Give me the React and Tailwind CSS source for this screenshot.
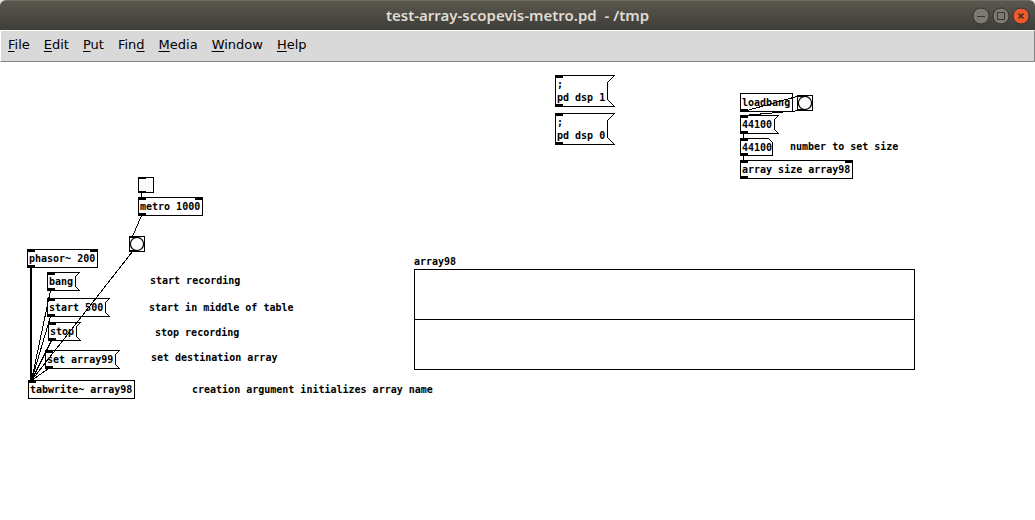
import { useState } from 'react';

const menus = [
  { before: '', key: 'F', after: 'ile' },
  { before: '', key: 'E', after: 'dit' },
  { before: '', key: 'P', after: 'ut' },
  { before: 'Fin', key: 'd', after: '' },
  { before: '', key: 'M', after: 'edia' },
  { before: '', key: 'W', after: 'indow' },
  { before: '', key: 'H', after: 'elp' },
];

const CHAR = 6;
const LINE = 13;

// Patch contents, in canvas coordinates
const objects = [
  { text: 'metro 1000', x: 138, y: 135, inlets: 2, outlets: 1 },
  { text: 'phasor~ 200', x: 27, y: 187, inlets: 2, outlets: 1 },
  { text: 'tabwrite~ array98', x: 28, y: 318, inlets: 1, outlets: 0 },
  { text: 'loadbang', x: 740, y: 31, inlets: 0, outlets: 1 },
  { text: 'array size array98', x: 740, y: 98, inlets: 2, outlets: 1 },
];

const messages = [
  { lines: [';', 'pd dsp 1'], x: 555, y: 13 },
  { lines: [';', 'pd dsp 0'], x: 555, y: 51 },
  { lines: ['44100'], x: 740, y: 53 },
  { lines: ['bang'], x: 47, y: 210 },
  { lines: ['start 500'], x: 47, y: 236 },
  { lines: ['stop'], x: 48, y: 260 },
  { lines: ['set array99'], x: 45, y: 288 },
];

const bangs = [
  { x: 129, y: 174 },
  { x: 797, y: 33 },
];

const comments = [
  { text: 'number to set size', x: 790, y: 78 },
  { text: 'start recording', x: 150, y: 212 },
  { text: 'start in middle of table', x: 149, y: 239 },
  { text: 'stop recording', x: 155, y: 264 },
  { text: 'set destination array', x: 151, y: 289 },
  { text: 'creation argument initializes array name', x: 192, y: 321 },
];

const wires = [
  [141, 130, 141, 135],
  [141, 153, 132, 174],
  [132, 189, 31, 318],
  [50, 228, 31, 318],
  [50, 254, 31, 318],
  [51, 278, 31, 318],
  [48, 306, 31, 318],
  [743, 49, 800, 33],
  [800, 48, 743, 53],
  [743, 71, 743, 76],
  [743, 93, 743, 98],
];

function Nlets({ inlets, outlets }) {
  return (
    <>
      {inlets > 0 && <span className="absolute left-0 top-0 h-[3px] w-[8px] bg-black" />}
      {inlets > 1 && <span className="absolute right-0 top-0 h-[3px] w-[8px] bg-black" />}
      {outlets > 0 && <span className="absolute bottom-0 left-0 h-[3px] w-[8px] bg-black" />}
    </>
  );
}

function ObjectBox({ text, x, y, inlets, outlets }) {
  return (
    <div className="absolute" style={{ left: x, top: y, width: text.length * CHAR + 5 }}>
      <div className="whitespace-pre border border-black px-px py-[2px]">{text}</div>
      <Nlets inlets={inlets} outlets={outlets} />
    </div>
  );
}

function MessageBox({ lines, x, y }) {
  const notch = lines.length > 1 ? 7 : 4;
  const body = Math.max(...lines.map((line) => line.length)) * CHAR + 5;
  const w = body + notch;
  const h = lines.length * LINE + 6;
  const right = w - 0.5;
  const bottom = h - 0.5;
  const inner = right - notch;
  const points = [
    [0.5, 0.5],
    [right, 0.5],
    [inner, 0.5 + notch],
    [inner, bottom - notch],
    [right, bottom],
    [0.5, bottom],
  ].join(' ');

  return (
    <button
      type="button"
      className="absolute whitespace-pre px-[2px] py-[3px] text-left"
      style={{ left: x, top: y, width: w }}
    >
      <svg
        className="absolute inset-0 h-full w-full"
        viewBox={`0 0 ${w} ${h}`}
        fill="none"
        stroke="black"
        shapeRendering="crispEdges"
      >
        <polygon points={points} />
      </svg>
      {lines.map((line) => (
        <span key={line} className="block">{line}</span>
      ))}
      <Nlets inlets={1} outlets={1} />
    </button>
  );
}

function Bang({ x, y }) {
  return (
    <button
      type="button"
      aria-label="bang"
      className="absolute h-4 w-4 border border-black bg-[#fcfcfc]"
      style={{ left: x, top: y }}
    >
      <svg className="absolute -left-px -top-px h-4 w-4" viewBox="0 0 16 16" fill="none" stroke="black">
        <circle cx="8" cy="8" r="6.6" strokeWidth="1.2" />
        <path d="M0 1h7M0 15h7" strokeWidth="2" shapeRendering="crispEdges" />
      </svg>
    </button>
  );
}

function Toggle({ x, y }) {
  return (
    <label className="absolute h-4 w-4" style={{ left: x, top: y }}>
      <input
        type="checkbox"
        aria-label="toggle metro"
        className="block h-4 w-4 appearance-none border border-black bg-[#fcfcfc]"
      />
      <span className="absolute left-0 top-0 h-[2px] w-[8px] bg-black" />
      <span className="absolute bottom-0 left-0 h-[2px] w-[8px] bg-black" />
    </label>
  );
}

function NumberBox({ x, y }) {
  const [value, setValue] = useState('44100');

  return (
    <div className="absolute h-[18px] w-[33px]" style={{ left: x, top: y }}>
      <svg
        className="absolute inset-0 h-full w-full"
        viewBox="0 0 33 18"
        fill="none"
        stroke="black"
        shapeRendering="crispEdges"
      >
        <polygon points="0.5,0.5 28.5,0.5 32.5,4.5 32.5,17.5 0.5,17.5" />
      </svg>
      <input
        type="text"
        aria-label="array size"
        value={value}
        onChange={(e) => setValue(e.target.value)}
        className="relative block h-[18px] w-full bg-transparent py-[2px] pl-[2px] outline-none"
      />
      <Nlets inlets={1} outlets={1} />
    </div>
  );
}

function TitleBar() {
  return (
    <div className="bg-[#e8e8e8]">
      <header className="grid h-[30px] grid-cols-[1fr_auto_1fr] items-center rounded-t-md border-t border-[#6b6960] bg-linear-to-b from-[#5a574e] to-[#3e3d38] px-[5px]">
        <h1 className="col-start-2 whitespace-pre pb-px font-['Noto_Sans',sans-serif] text-[15px] leading-5 font-semibold text-[#dfdbd2]">
          test-array-scopevis-metro.pd  - /tmp
        </h1>
        <div className="flex justify-end gap-[2px]">
          <button type="button" aria-label="Minimize">
            <svg className="block h-[18px] w-[18px]" viewBox="0 0 18 18" fill="none">
              <circle cx="9" cy="9" r="8" fill="#7c7a73" stroke="#34332e" />
              <path d="M5 9.5h8" stroke="#3a3934" shapeRendering="crispEdges" />
            </svg>
          </button>
          <button type="button" aria-label="Maximize">
            <svg className="block h-[18px] w-[18px]" viewBox="0 0 18 18" fill="none">
              <circle cx="9" cy="9" r="8" fill="#7c7a73" stroke="#34332e" />
              <path d="M5.5 5.5h7v7h-7z" stroke="#3a3934" shapeRendering="crispEdges" />
            </svg>
          </button>
          <button type="button" aria-label="Close">
            <svg className="block h-[18px] w-[18px]" viewBox="0 0 18 18" fill="none">
              <circle cx="9" cy="9" r="8" fill="#ee5b2c" stroke="#34332e" />
              <path d="M6.5 6.5l5 5M11.5 6.5l-5 5" stroke="#3f2a1c" strokeWidth="1.5" />
            </svg>
          </button>
        </div>
      </header>
    </div>
  );
}

function MenuBar() {
  return (
    <nav className="flex h-8 items-center gap-[14px] border border-b-[#828282] border-l-white border-r-[#828282] border-t-white bg-[#d9d9d9] px-[7px] pb-[2px] font-['DejaVu_Sans',sans-serif] text-[13px] text-black">
      {menus.map((m) => (
        <button key={m.key} type="button" className="leading-5">
          {m.before}
          <span className="underline decoration-1 underline-offset-2">{m.key}</span>
          {m.after}
        </button>
      ))}
    </nav>
  );
}

function Patch() {
  return (
    <main className="relative min-h-[400px] flex-1 overflow-hidden bg-white font-['DejaVu_Sans_Mono',monospace] text-[10px] font-bold leading-[13px] text-black">
      {objects.map((o) => (
        <ObjectBox key={o.text} {...o} />
      ))}
      {messages.map((m) => (
        <MessageBox key={`${m.x}-${m.y}`} {...m} />
      ))}
      {bangs.map((b) => (
        <Bang key={b.x} {...b} />
      ))}
      <Toggle x={138} y={115} />
      <NumberBox x={740} y={76} />

      {comments.map((c) => (
        <p key={c.text} className="absolute whitespace-pre" style={{ left: c.x, top: c.y }}>
          {c.text}
        </p>
      ))}

      {/* Array graph */}
      <figure className="absolute left-[414px] top-[193px] w-[501px]">
        <figcaption className="mb-px">array98</figcaption>
        <div className="border border-black">
          <div className="h-[50px] border-b border-black" />
          <div className="h-[49px]" />
        </div>
      </figure>

      {/* Connections */}
      <svg
        className="pointer-events-none absolute inset-0 h-full w-full"
        stroke="black"
        shapeRendering="crispEdges"
      >
        {wires.map(([x1, y1, x2, y2]) => (
          <line key={`${x1}-${y1}-${y2}`} x1={x1 + 0.5} y1={y1 + 0.5} x2={x2 + 0.5} y2={y2 + 0.5} />
        ))}
        <line x1="31" y1="205" x2="31" y2="318" strokeWidth="2" />
      </svg>
    </main>
  );
}

function App() {
  return (
    <div className="flex min-h-screen flex-col bg-white">
      <TitleBar />
      <MenuBar />
      <Patch />
    </div>
  );
}

export default App;
